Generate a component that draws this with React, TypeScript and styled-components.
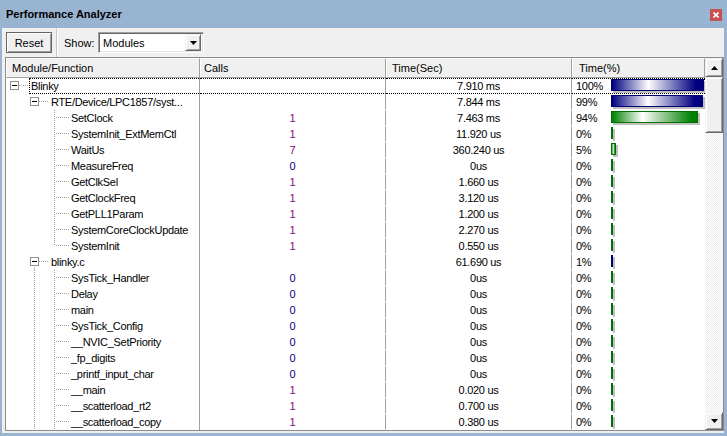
import React from "react";
import styled, { createGlobalStyle, css } from "styled-components";

const Global = createGlobalStyle`
  html, body { margin: 0; padding: 0; background: #99b4d1; }
  body { font-family: "Liberation Sans", Arial, sans-serif; font-size: 11px; color: #000; }
  * { box-sizing: border-box; }
`;

type Row = {
  name: string;
  level: number;
  calls?: number;
  time: string;
  pct: number;
  color: "blue" | "green";
  box?: boolean;
  up?: boolean;
  down?: boolean;
  guides: boolean[];
  selected?: boolean;
};

const rteKids: [string, number, string, number][] = [
  ["SetClock", 1, "7.463 ms", 94],
  ["SystemInit_ExtMemCtl", 1, "11.920 us", 0],
  ["WaitUs", 7, "360.240 us", 5],
  ["MeasureFreq", 0, "0us", 0],
  ["GetClkSel", 1, "1.660 us", 0],
  ["GetClockFreq", 1, "3.120 us", 0],
  ["GetPLL1Param", 1, "1.200 us", 0],
  ["SystemCoreClockUpdate", 1, "2.270 us", 0],
  ["SystemInit", 1, "0.550 us", 0],
];

const blinkyKids: [string, number, string, number][] = [
  ["SysTick_Handler", 0, "0us", 0],
  ["Delay", 0, "0us", 0],
  ["main", 0, "0us", 0],
  ["SysTick_Config", 0, "0us", 0],
  ["__NVIC_SetPriority", 0, "0us", 0],
  ["_fp_digits", 0, "0us", 0],
  ["_printf_input_char", 0, "0us", 0],
  ["__main", 1, "0.020 us", 0],
  ["__scatterload_rt2", 1, "0.700 us", 0],
  ["__scatterload_copy", 1, "0.380 us", 0],
];

const rows: Row[] = [
  { name: "Blinky", level: 0, time: "7.910 ms", pct: 100, color: "blue", box: true, guides: [], selected: true },
  { name: "RTE/Device/LPC1857/syst...", level: 1, time: "7.844 ms", pct: 99, color: "blue", box: true, guides: [false] },
  ...rteKids.map(([name, calls, time, pct], i) => ({
    name, calls, time, pct, level: 2, color: "green" as const, up: true,
    down: i < rteKids.length - 1, guides: [false, false],
  })),
  { name: "blinky.c", level: 1, time: "61.690 us", pct: 1, color: "blue", box: true, down: true, guides: [false] },
  ...blinkyKids.map(([name, calls, time, pct]) => ({
    name, calls, time, pct, level: 2, color: "green" as const, up: true, down: true, guides: [false, true],
  })),
];

const Window = styled.div`
  width: 727px;
  height: 436px;
  background: #99b4d1;
  display: flex;
  flex-direction: column;
  padding: 0 3px 3px 2px;
`;

const TitleBar = styled.div`
  height: 28px;
  flex: none;
  display: flex;
  align-items: center;
  justify-content: space-between;
  padding: 0 2px 0 4px;
  font-weight: bold;
  font-size: 11px;
`;

const CloseBtn = styled.div`
  width: 12px;
  height: 12px;
  background: #c75050;
  display: flex;
  align-items: center;
  justify-content: center;
  margin-top: 2px;
`;

const Body = styled.div`
  flex: 1;
  background: #f0f0f0;
  display: flex;
  flex-direction: column;
  padding: 0 0 2px 3px;
`;

const Toolbar = styled.div`
  height: 29px;
  flex: none;
  display: flex;
  align-items: center;
  padding-left: 1px;
`;

const Button = styled.div`
  width: 46px;
  height: 21px;
  display: flex;
  align-items: center;
  justify-content: center;
  background: #f0f0f0;
  border: 1px solid #646464;
  box-shadow: inset 1px 1px #fff, inset -1px -1px #a0a0a0;
  font-size: 11px;
`;

const Separator = styled.div`
  width: 2px;
  height: 29px;
  margin: 0 6px 0 4px;
  border-left: 1px solid #c8c8c8;
  border-right: 1px solid #fff;
`;

const Label = styled.span`
  width: 34px;
  font-size: 11px;
`;

const Combo = styled.div`
  width: 106px;
  height: 21px;
  display: flex;
  align-items: center;
  background: #fff;
  border: 1px solid;
  border-color: #a0a0a0 #fff #fff #a0a0a0;
  box-shadow: inset 1px 1px #696969, inset -1px -1px #e3e3e3;
  padding: 1px 2px 1px 4px;
  font-size: 11px;
`;

const ComboText = styled.span`
  flex: 1;
`;

const ArrowBtn = styled.div<{ $w?: number; $h?: number }>`
  width: ${(p) => p.$w ?? 16}px;
  height: ${(p) => p.$h ?? 17}px;
  flex: none;
  display: flex;
  align-items: center;
  justify-content: center;
  background: #f0f0f0;
  border: 1px solid;
  border-color: #f0f0f0 #696969 #696969 #f0f0f0;
  box-shadow: inset 1px 1px #fff, inset -1px -1px #a0a0a0;
`;

const Frame = styled.div`
  width: 719px;
  height: 374px;
  flex: none;
  display: flex;
  border: 1px solid #8c8c8c;
  background: #fff;
`;

const Grid = styled.div`
  width: 699px;
  display: flex;
  flex-direction: column;
  overflow: hidden;
`;

const cols = "194px 186px 186px 133px";

const Header = styled.div`
  display: grid;
  grid-template-columns: ${cols};
  height: 20px;
  flex: none;
`;

const HeaderCell = styled.div<{ $pad: number }>`
  display: flex;
  align-items: center;
  padding-left: ${(p) => p.$pad}px;
  background: #f0f0f0;
  border-top: 1px solid #fff;
  border-left: 1px solid #fff;
  border-right: 1px solid #a0a0a0;
  border-bottom: 1px solid #a0a0a0;
  font-size: 11px;
`;

const RowLine = styled.div`
  display: grid;
  grid-template-columns: ${cols};
  height: 16px;
  flex: none;
  letter-spacing: -0.3px;
`;

const TreeCell = styled.div`
  display: flex;
  height: 16px;
  border-right: 1px solid #a0a0a0;
  overflow: hidden;
  white-space: nowrap;
`;

const selBorders = css`
  border-top: 1px dotted #000;
  border-bottom: 1px dotted #000;
`;

const NodeLabel = styled.div<{ $sel?: boolean }>`
  flex: 1;
  height: 16px;
  line-height: 14px;
  padding-left: 1px;
  border: 1px solid transparent;
  border-right: none;
  ${(p) => p.$sel && css`
    ${selBorders};
    border-left: 1px dotted #000;
  `}
`;

const DataCell = styled.div<{ $sel?: boolean; $last?: boolean; $color?: string; $center?: boolean }>`
  height: 16px;
  line-height: 14px;
  display: flex;
  align-items: center;
  justify-content: ${(p) => (p.$center ? "center" : "flex-start")};
  padding-left: ${(p) => (p.$center ? 0 : 4)}px;
  color: ${(p) => p.$color ?? "#000"};
  border-top: 1px solid transparent;
  border-bottom: 1px solid transparent;
  border-right: ${(p) => (p.$last ? "1px solid transparent" : "1px solid #a0a0a0")};
  white-space: nowrap;
  ${(p) => p.$sel && selBorders};
  ${(p) => p.$sel && p.$last && css`border-right: 1px dotted #000;`}
`;

const PctText = styled.span`
  width: 35px;
  flex: none;
`;

const BarSlot = styled.div`
  flex: 1;
  height: 14px;
  display: flex;
  align-items: flex-start;
`;

const Bar = styled.div<{ $color: "blue" | "green" }>`
  height: 12px;
  border: 1px solid ${(p) => (p.$color === "blue" ? "#000070" : "#007000")};
  background: ${(p) =>
    p.$color === "blue"
      ? "linear-gradient(to right, #000080 0%, #ffffff 40%, #000080 92%)"
      : "linear-gradient(to right, #008000 0%, #ffffff 36%, #008000 94%)"};
  box-shadow: 2px 2px 0 #c0c0c0;
`;

const Scrollbar = styled.div`
  width: 18px;
  display: flex;
  flex-direction: column;
`;

const Thumb = styled.div`
  height: 56px;
  flex: none;
  background: #f0f0f0;
  border: 1px solid;
  border-color: #f0f0f0 #696969 #696969 #f0f0f0;
  box-shadow: inset 1px 1px #fff, inset -1px -1px #a0a0a0;
`;

const Track = styled.div`
  flex: 1;
  background: repeating-conic-gradient(#ffffff 0 25%, #ececec 0 50%) 0 0 / 2px 2px;
`;

const DOT = "#a0a0a0";

const Spacer: React.FC<{ line: boolean }> = ({ line }) => (
  <svg width="20" height="16" style={{ flex: "none" }}>
    {line && <line x1="8.5" y1="0" x2="8.5" y2="16" stroke={DOT} strokeDasharray="1 1" />}
  </svg>
);

const Node: React.FC<{ row: Row }> = ({ row }) => (
  <svg width="23" height="16" style={{ flex: "none" }}>
    {row.box ? (
      <>
        <line x1="13" y1="7.5" x2="23" y2="7.5" stroke={DOT} strokeDasharray="1 1" />
        {row.down && <line x1="8.5" y1="13" x2="8.5" y2="16" stroke={DOT} strokeDasharray="1 1" />}
        <rect x="4.5" y="3.5" width="8" height="8" fill="#fff" stroke="#919191" />
        <line x1="6" y1="7.5" x2="11" y2="7.5" stroke="#000" />
      </>
    ) : (
      <>
        <line x1="8.5" y1="0" x2="8.5" y2={row.down ? 16 : 8} stroke={DOT} strokeDasharray="1 1" />
        <line x1="10" y1="7.5" x2="23" y2="7.5" stroke={DOT} strokeDasharray="1 1" />
      </>
    )}
  </svg>
);

const Tri: React.FC<{ dir: "up" | "down" }> = ({ dir }) => (
  <svg width="7" height="4">
    <polygon points={dir === "up" ? "3.5,0 7,4 0,4" : "0,0 7,0 3.5,4"} fill="#000" />
  </svg>
);

const callColor = (c?: number) => (c === undefined ? "#000" : c === 0 ? "#000080" : "#800080");

export default function App() {
  return (
    <>
      <Global />
      <Window>
        <TitleBar>
          <span>Performance Analyzer</span>
          <CloseBtn>
            <svg width="6" height="6">
              <path d="M0.5 0.5 L5.5 5.5 M5.5 0.5 L0.5 5.5" stroke="#fff" strokeWidth="1.6" />
            </svg>
          </CloseBtn>
        </TitleBar>
        <Body>
          <Toolbar>
            <Button>Reset</Button>
            <Separator />
            <Label>Show:</Label>
            <Combo>
              <ComboText>Modules</ComboText>
              <ArrowBtn>
                <Tri dir="down" />
              </ArrowBtn>
            </Combo>
          </Toolbar>
          <Frame>
            <Grid>
              <Header>
                <HeaderCell $pad={5}>Module/Function</HeaderCell>
                <HeaderCell $pad={3}>Calls</HeaderCell>
                <HeaderCell $pad={5}>Time(Sec)</HeaderCell>
                <HeaderCell $pad={6}>Time(%)</HeaderCell>
              </Header>
              {rows.map((r, i) => (
                <RowLine key={i}>
                  <TreeCell>
                    {r.guides.map((g, j) => (
                      <Spacer key={j} line={g} />
                    ))}
                    <Node row={r} />
                    <NodeLabel $sel={r.selected}>{r.name}</NodeLabel>
                  </TreeCell>
                  <DataCell $sel={r.selected} $center $color={callColor(r.calls)}>
                    {r.calls ?? ""}
                  </DataCell>
                  <DataCell $sel={r.selected} $center>
                    {r.time}
                  </DataCell>
                  <DataCell $sel={r.selected} $last>
                    <PctText>{r.pct}%</PctText>
                    <BarSlot>
                      <Bar $color={r.color} style={{ width: Math.max(2, Math.round(r.pct * 0.93)) }} />
                    </BarSlot>
                  </DataCell>
                </RowLine>
              ))}
            </Grid>
            <Scrollbar>
              <ArrowBtn $w={18} $h={19}>
                <Tri dir="up" />
              </ArrowBtn>
              <Thumb />
              <Track />
              <ArrowBtn $w={18} $h={18}>
                <Tri dir="down" />
              </ArrowBtn>
            </Scrollbar>
          </Frame>
        </Body>
      </Window>
    </>
  );
}
